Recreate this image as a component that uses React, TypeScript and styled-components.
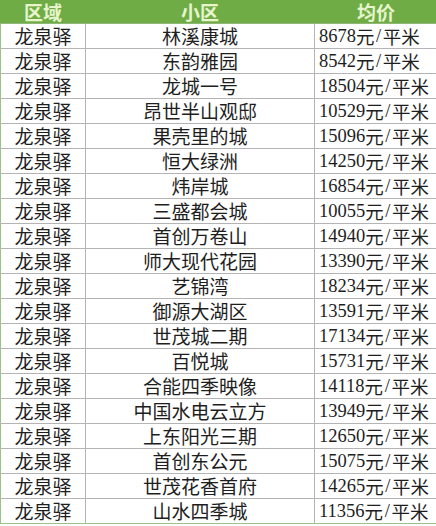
import React from "react";
import styled, { createGlobalStyle } from "styled-components";

const GlobalStyle = createGlobalStyle`
  html, body {
    margin: 0;
    padding: 0;
    background: #ffffff;
  }
`;

const Table = styled.table`
  width: 434px;
  table-layout: fixed;
  border-collapse: collapse;
  font-family: "Noto Sans CJK SC", "Liberation Sans", sans-serif;
  font-size: 19px;
  color: #1e1e1e;
`;

const HeadCell = styled.th<{ $w: number }>`
  width: ${(p) => p.$w}px;
  padding: 0;
  background: #6fac46;
  color: #e6f5cc;
  font-weight: 700;
  border: 1px solid #6fac46;
  border-bottom: 1px solid #8fb878;
`;

const Cell = styled.td`
  padding: 0;
  border: 1px solid #b4b4b4;
  &:first-child {
    border-left-color: #9cc08a;
  }
  &:last-child {
    border-right-color: #9cc08a;
  }
  tr:last-child > & {
    border-bottom-color: #9cc08a;
  }
`;

const Inner = styled.div<{ $align?: "left" | "center"; $h?: number }>`
  height: ${(p) => p.$h ?? 24}px;
  display: flex;
  align-items: center;
  justify-content: ${(p) => (p.$align === "left" ? "flex-start" : "center")};
  padding-left: ${(p) => (p.$align === "left" ? 4 : 0)}px;
  white-space: nowrap;
  line-height: 1.1;
`;

const Price = styled.span`
  font-family: "Liberation Serif", "Noto Sans CJK SC", serif;
  font-size: 18.5px;
`;

const Unit = styled.span`
  font-family: "Noto Sans CJK SC", sans-serif;
  font-size: 18.5px;
`;

const Slash = styled.span`
  display: inline-block;
  width: 0.45em;
  text-align: center;
  font-family: "Liberation Serif", serif;
  font-size: 18.5px;
`;

type Item = { area: string; name: string; price: number };

const rows: Item[] = [
  { area: "龙泉驿", name: "林溪康城", price: 8678 },
  { area: "龙泉驿", name: "东韵雅园", price: 8542 },
  { area: "龙泉驿", name: "龙城一号", price: 18504 },
  { area: "龙泉驿", name: "昂世半山观邸", price: 10529 },
  { area: "龙泉驿", name: "果壳里的城", price: 15096 },
  { area: "龙泉驿", name: "恒大绿洲", price: 14250 },
  { area: "龙泉驿", name: "炜岸城", price: 16854 },
  { area: "龙泉驿", name: "三盛都会城", price: 10055 },
  { area: "龙泉驿", name: "首创万卷山", price: 14940 },
  { area: "龙泉驿", name: "师大现代花园", price: 13390 },
  { area: "龙泉驿", name: "艺锦湾", price: 18234 },
  { area: "龙泉驿", name: "御源大湖区", price: 13591 },
  { area: "龙泉驿", name: "世茂城二期", price: 17134 },
  { area: "龙泉驿", name: "百悦城", price: 15731 },
  { area: "龙泉驿", name: "合能四季映像", price: 14118 },
  { area: "龙泉驿", name: "中国水电云立方", price: 13949 },
  { area: "龙泉驿", name: "上东阳光三期", price: 12650 },
  { area: "龙泉驿", name: "首创东公元", price: 15075 },
  { area: "龙泉驿", name: "世茂花香首府", price: 14265 },
  { area: "龙泉驿", name: "山水四季城", price: 11356 },
];

export default function App() {
  return (
    <>
      <GlobalStyle />
      <Table>
        <thead>
          <tr>
            <HeadCell $w={84}>
              <Inner $h={22}>区域</Inner>
            </HeadCell>
            <HeadCell $w={228}>
              <Inner $h={22}>小区</Inner>
            </HeadCell>
            <HeadCell $w={122}>
              <Inner $h={22}>均价</Inner>
            </HeadCell>
          </tr>
        </thead>
        <tbody>
          {rows.map((r) => (
            <tr key={r.name}>
              <Cell>
                <Inner>{r.area}</Inner>
              </Cell>
              <Cell>
                <Inner>{r.name}</Inner>
              </Cell>
              <Cell>
                <Inner $align="left">
                  <Price>{r.price}</Price>
                  <Unit>元</Unit>
                  <Slash>/</Slash>
                  <Unit>平米</Unit>
                </Inner>
              </Cell>
            </tr>
          ))}
        </tbody>
      </Table>
    </>
  );
}
